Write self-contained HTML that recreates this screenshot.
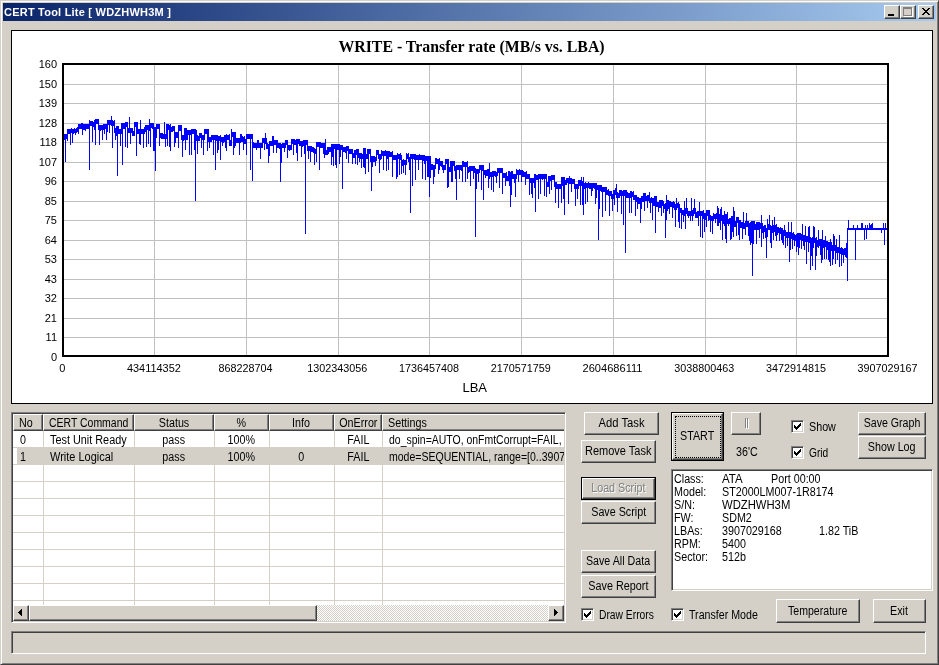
<!DOCTYPE html><html><head><meta charset="utf-8"><title>CERT Tool Lite</title><style>
html,body{margin:0;padding:0}
body{width:939px;height:665px;overflow:hidden;background:#d4d0c8;font-family:"Liberation Sans",Arial,sans-serif;font-size:12px;color:#000;position:relative}
div{position:absolute;box-sizing:border-box;white-space:nowrap}
div,svg{will-change:transform}
.sl{display:inline-block;transform:scaleX(0.895);transform-origin:0 50%}
.sc{display:inline-block;transform:scaleX(0.895);transform-origin:50% 50%}
.btn{background:#d4d0c8;text-align:center;border:1px solid;border-color:#fff #404040 #404040 #fff;box-shadow:inset -1px -1px 0 #808080,inset 1px 1px 0 #d4d0c8}
.dis{color:#808080;text-shadow:1px 1px 0 #fff}
.sunk{border:1px solid;border-color:#808080 #fff #fff #808080;box-shadow:inset 1px 1px 0 #404040,inset -1px -1px 0 #d4d0c8}
.cb{width:13px;height:13px;background:#fff;border:1px solid;border-color:#808080 #fff #fff #808080;box-shadow:inset 1px 1px 0 #404040,inset -1px -1px 0 #d4d0c8}
.hd{background:#d4d0c8;border:1px solid;border-color:#fff #404040 #404040 #fff;box-shadow:inset -1px -1px 0 #808080;height:17px;top:0;line-height:17px;padding:0 0 0 5.3px}
.cell{height:17px;line-height:19px}
svg text{font-family:"Liberation Sans",Arial,sans-serif;font-size:11px;fill:#000}
</style></head><body>
<div class="" style="left:0px;top:0px;width:939px;height:665px;border:1px solid;border-color:#d4d0c8 #404040 #404040 #d4d0c8;box-shadow:inset 1px 1px 0 #fff,inset -1px -1px 0 #808080"></div>
<div class="" style="left:3px;top:3px;width:933px;height:18px;background:linear-gradient(to right,#0a246a,#a6caf0);color:#fff;font-weight:bold;line-height:19px;padding-left:1px;font-size:11px;letter-spacing:0.22px">CERT Tool Lite [ WDZHWH3M ]</div>
<div class="btn" style="left:884px;top:5px;width:16px;height:14px;padding:0"><svg width="16" height="14" style="position:absolute;left:-1px;top:-1px" shape-rendering="crispEdges"><rect x="4" y="9" width="6" height="2" fill="#000"/></svg></div>
<div class="btn" style="left:900px;top:5px;width:16px;height:14px;padding:0"><svg width="16" height="14" style="position:absolute;left:-1px;top:-1px" shape-rendering="crispEdges"><path d="M4 3h9v9h-9z" fill="#fff"/><path d="M3 2h9v9h-9z" fill="#808080"/><path d="M4 4h7v6h-7z" fill="#d4d0c8"/><path d="M5 5h7v6h-7z" fill="none"/></svg></div>
<div class="btn" style="left:918px;top:5px;width:16px;height:14px;padding:0"><svg width="16" height="14" style="position:absolute;left:-1px;top:-1px" shape-rendering="crispEdges"><path d="M4 3h2v1h1v1h2v-1h1v-1h2v1h-1v1h-1v1h-1v1h1v1h1v1h1v1h-2v-1h-1v-1h-2v1h-1v1h-2v-1h1v-1h1v-1h1v-1h-1v-1h-1v-1h-1z" fill="#000"/></svg></div>
<div class="" style="left:11px;top:30px;width:922px;height:374px;background:#fff;border:1px solid #000"></div>
<svg width="939" height="665" style="position:absolute;left:0;top:0"><path d="M64 84.5H887M64 103.5H887M64 123.5H887M64 142.5H887M64 162.5H887M64 181.5H887M64 201.5H887M64 220.5H887M64 240.5H887M64 259.5H887M64 279.5H887M64 298.5H887M64 318.5H887M64 337.5H887M154.5 65V355M246.5 65V355M338.5 65V355M429.5 65V355M521.5 65V355M613.5 65V355M705.5 65V355M796.5 65V355" stroke="#c0c0c0" stroke-width="1" fill="none" shape-rendering="crispEdges"/><path d="M64.5 134V140M65.5 134V162M66.5 134V139M67.5 129V141M68.5 129V134M69.5 129V134M70.5 129V145M71.5 128V133M72.5 129V143M73.5 129V134M74.5 128V133M75.5 129V135M76.5 128V133M77.5 127V132M78.5 124V134M79.5 124V129M80.5 124V129M81.5 123V129M82.5 123V135M83.5 124V130M84.5 124V130M85.5 124V131M86.5 124V129M87.5 124V129M88.5 124V129M89.5 120V170M90.5 121V126M91.5 121V126M92.5 121V142M93.5 122V127M94.5 120V130M95.5 119V145M96.5 119V124M97.5 119V124M98.5 119V130M99.5 125V145M100.5 125V131M101.5 125V130M102.5 125V140M103.5 124V130M104.5 124V134M105.5 124V129M106.5 124V140M107.5 120V132M108.5 120V125M109.5 120V133M110.5 120V125M111.5 116V126M112.5 120V148M113.5 121V126M114.5 120V133M115.5 128V140M116.5 126V136M117.5 126V176M118.5 126V134M119.5 129V134M120.5 129V146M121.5 123V134M122.5 123V165M123.5 123V129M124.5 123V129M125.5 122V147M126.5 122V127M127.5 122V148M128.5 128V133M129.5 117V133M130.5 128V144M131.5 128V133M132.5 128V136M133.5 131V136M134.5 122V136M135.5 122V127M136.5 122V156M137.5 122V134M138.5 129V134M139.5 129V144M140.5 120V145M141.5 129V134M142.5 129V134M143.5 129V148M144.5 127V134M145.5 125V132M146.5 125V147M147.5 125V130M148.5 125V144M149.5 119V131M150.5 123V147M151.5 123V128M152.5 123V129M153.5 123V151M154.5 127V151M155.5 127V171M156.5 124V138M157.5 124V129M158.5 124V129M159.5 124V146M160.5 133V138M161.5 133V139M162.5 133V139M163.5 134V139M164.5 122V139M165.5 134V147M166.5 124V139M167.5 124V146M168.5 124V130M169.5 125V147M170.5 124V151M171.5 127V132M172.5 126V132M173.5 126V131M174.5 126V147M175.5 132V143M176.5 132V138M177.5 132V138M178.5 125V148M179.5 125V131M180.5 125V131M181.5 125V140M182.5 135V157M183.5 135V141M184.5 128V140M185.5 128V150M186.5 128V140M187.5 130V140M188.5 130V135M189.5 130V155M190.5 130V135M191.5 129V155M192.5 129V134M193.5 129V134M194.5 129V150M195.5 129V201M196.5 130V141M197.5 135V154M198.5 136V141M199.5 133V141M200.5 133V138M201.5 133V148M202.5 135V140M203.5 135V155M204.5 129V140M205.5 129V134M206.5 129V134M207.5 129V151M208.5 129V142M209.5 137V148M210.5 137V142M211.5 135V142M212.5 135V140M213.5 135V155M214.5 135V140M215.5 135V170M216.5 135V141M217.5 135V153M218.5 136V150M219.5 136V141M220.5 135V160M221.5 137V142M222.5 137V146M223.5 137V143M224.5 135V142M225.5 135V148M226.5 134V151M227.5 135V140M228.5 135V140M229.5 134V146M230.5 140V146M231.5 129V146M232.5 132V137M233.5 132V155M234.5 132V148M235.5 132V146M236.5 138V143M237.5 138V143M238.5 138V143M239.5 138V155M240.5 134V143M241.5 134V142M242.5 136V142M243.5 137V150M244.5 136V144M245.5 139V144M246.5 134V155M247.5 134V139M248.5 134V139M249.5 134V139M250.5 134V170M251.5 134V139M252.5 134V181M253.5 142V148M254.5 143V148M255.5 143V148M256.5 143V150M257.5 140V148M258.5 140V148M259.5 143V148M260.5 143V159M261.5 143V148M262.5 138V148M263.5 138V143M264.5 138V150M265.5 133V144M266.5 138V149M267.5 143V149M268.5 144V163M269.5 141V156M270.5 141V146M271.5 141V146M272.5 136V146M273.5 136V153M274.5 140V145M275.5 140V145M276.5 140V153M277.5 140V148M278.5 143V148M279.5 143V149M280.5 143V182M281.5 144V163M282.5 143V148M283.5 143V148M284.5 143V152M285.5 140V148M286.5 140V145M287.5 140V158M288.5 145V150M289.5 145V151M290.5 145V150M291.5 139V150M292.5 139V144M293.5 139V155M294.5 139V145M295.5 140V145M296.5 139V153M297.5 139V161M298.5 139V144M299.5 139V146M300.5 141V146M301.5 141V157M302.5 141V147M303.5 140V146M304.5 140V154M305.5 140V234M306.5 140V145M307.5 140V151M308.5 146V159M309.5 146V151M310.5 146V162M311.5 146V152M312.5 147V152M313.5 147V153M314.5 148V165M315.5 149V154M316.5 142V162M317.5 142V147M318.5 142V147M319.5 142V170M320.5 142V148M321.5 143V148M322.5 143V148M323.5 143V154M324.5 143V158M325.5 139V155M326.5 150V155M327.5 147V155M328.5 147V154M329.5 147V152M330.5 147V152M331.5 144V165M332.5 144V157M333.5 144V166M334.5 144V149M335.5 144V165M336.5 144V168M337.5 144V150M338.5 144V150M339.5 144V164M340.5 145V157M341.5 145V150M342.5 145V189M343.5 147V152M344.5 147V152M345.5 147V153M346.5 146V159M347.5 146V151M348.5 146V163M349.5 149V154M350.5 149V154M351.5 149V154M352.5 149V164M353.5 153V158M354.5 150V158M355.5 150V164M356.5 149V155M357.5 149V165M358.5 149V158M359.5 153V162M360.5 153V159M361.5 153V168M362.5 154V159M363.5 148V167M364.5 148V168M365.5 148V174M366.5 154V159M367.5 149V159M368.5 149V172M369.5 149V154M370.5 149V162M371.5 156V191M372.5 156V167M373.5 156V162M374.5 156V162M375.5 157V166M376.5 150V161M377.5 150V155M378.5 150V159M379.5 154V173M380.5 154V160M381.5 150V159M382.5 151V156M383.5 151V170M384.5 151V156M385.5 150V156M386.5 151V171M387.5 151V159M388.5 151V170M389.5 151V157M390.5 152V157M391.5 152V157M392.5 151V177M393.5 155V160M394.5 155V160M395.5 155V160M396.5 155V179M397.5 153V177M398.5 154V159M399.5 154V175M400.5 153V160M401.5 155V174M402.5 160V166M403.5 159V173M404.5 160V165M405.5 160V175M406.5 153V165M407.5 154V159M408.5 153V162M409.5 157V170M410.5 154V213M411.5 154V159M412.5 154V186M413.5 154V159M414.5 154V160M415.5 154V180M416.5 155V160M417.5 155V160M418.5 155V170M419.5 154V160M420.5 155V160M421.5 155V160M422.5 155V179M423.5 155V161M424.5 155V164M425.5 156V180M426.5 156V161M427.5 156V177M428.5 156V177M429.5 156V197M430.5 156V178M431.5 164V170M432.5 164V170M433.5 165V184M434.5 165V177M435.5 158V169M436.5 158V164M437.5 159V164M438.5 159V174M439.5 158V170M440.5 161V166M441.5 161V167M442.5 161V170M443.5 165V173M444.5 165V170M445.5 159V170M446.5 159V164M447.5 159V188M448.5 159V187M449.5 167V172M450.5 161V172M451.5 161V182M452.5 161V182M453.5 161V166M454.5 161V171M455.5 166V179M456.5 165V200M457.5 165V170M458.5 165V170M459.5 165V179M460.5 165V170M461.5 165V171M462.5 161V182M463.5 161V167M464.5 162V167M465.5 162V182M466.5 162V167M467.5 161V179M468.5 167V173M469.5 166V172M470.5 166V186M471.5 166V171M472.5 166V171M473.5 166V179M474.5 166V173M475.5 168V237M476.5 169V189M477.5 169V174M478.5 169V182M479.5 165V173M480.5 165V170M481.5 165V190M482.5 165V171M483.5 165V200M484.5 170V175M485.5 170V178M486.5 170V176M487.5 169V176M488.5 169V188M489.5 163V179M490.5 172V177M491.5 172V190M492.5 171V177M493.5 171V192M494.5 171V176M495.5 171V177M496.5 172V183M497.5 168V176M498.5 168V173M499.5 168V188M500.5 168V173M501.5 168V173M502.5 168V194M503.5 173V178M504.5 173V178M505.5 173V186M506.5 172V181M507.5 176V181M508.5 171V181M509.5 171V186M510.5 172V207M511.5 171V195M512.5 171V179M513.5 174V179M514.5 174V183M515.5 174V197M516.5 169V179M517.5 170V175M518.5 170V182M519.5 169V175M520.5 170V175M521.5 170V182M522.5 170V177M523.5 171V177M524.5 172V177M525.5 172V185M526.5 171V179M527.5 174V179M528.5 174V179M529.5 174V195M530.5 178V183M531.5 178V194M532.5 178V198M533.5 178V183M534.5 174V188M535.5 174V212M536.5 175V180M537.5 175V180M538.5 174V199M539.5 174V179M540.5 174V194M541.5 174V179M542.5 174V180M543.5 174V179M544.5 174V196M545.5 174V179M546.5 174V197M547.5 182V187M548.5 176V187M549.5 176V194M550.5 176V181M551.5 175V190M552.5 175V180M553.5 175V180M554.5 175V187M555.5 182V203M556.5 182V189M557.5 184V189M558.5 184V208M559.5 184V189M560.5 184V189M561.5 177V203M562.5 177V186M563.5 177V199M564.5 177V215M565.5 180V185M566.5 178V185M567.5 178V183M568.5 178V204M569.5 176V184M570.5 178V184M571.5 178V192M572.5 179V184M573.5 179V184M574.5 179V189M575.5 184V206M576.5 184V189M577.5 184V199M578.5 180V189M579.5 180V186M580.5 180V205M581.5 177V186M582.5 181V205M583.5 177V215M584.5 183V189M585.5 182V204M586.5 183V188M587.5 183V202M588.5 182V188M589.5 183V189M590.5 183V189M591.5 183V196M592.5 183V191M593.5 183V188M594.5 183V189M595.5 183V204M596.5 183V198M597.5 185V190M598.5 185V240M599.5 185V209M600.5 185V191M601.5 185V192M602.5 187V217M603.5 187V192M604.5 187V192M605.5 187V211M606.5 187V195M607.5 190V195M608.5 189V196M609.5 191V216M610.5 191V196M611.5 191V199M612.5 194V211M613.5 190V199M614.5 190V205M615.5 188V195M616.5 184V198M617.5 192V212M618.5 193V198M619.5 190V198M620.5 190V196M621.5 190V214M622.5 191V196M623.5 190V225M624.5 190V196M625.5 190V253M626.5 190V198M627.5 192V198M628.5 193V198M629.5 193V213M630.5 191V198M631.5 191V213M632.5 192V197M633.5 191V200M634.5 195V200M635.5 195V216M636.5 195V202M637.5 197V209M638.5 197V204M639.5 198V204M640.5 198V223M641.5 196V209M642.5 196V202M643.5 193V202M644.5 193V211M645.5 193V201M646.5 196V201M647.5 195V208M648.5 195V201M649.5 192V203M650.5 198V213M651.5 197V203M652.5 198V220M653.5 198V206M654.5 196V206M655.5 196V233M656.5 196V207M657.5 202V207M658.5 202V212M659.5 200V208M660.5 200V208M661.5 200V216M662.5 200V206M663.5 201V213M664.5 204V209M665.5 203V238M666.5 195V220M667.5 200V211M668.5 200V209M669.5 201V214M670.5 201V207M671.5 202V207M672.5 202V218M673.5 201V208M674.5 202V210M675.5 204V227M676.5 198V210M677.5 203V208M678.5 202V222M679.5 204V228M680.5 208V213M681.5 208V229M682.5 210V215M683.5 210V222M684.5 201V216M685.5 208V229M686.5 198V214M687.5 208V216M688.5 211V218M689.5 211V216M690.5 211V221M691.5 198V216M692.5 210V221M693.5 208V216M694.5 199V214M695.5 208V218M696.5 212V218M697.5 211V218M698.5 211V226M699.5 202V216M700.5 211V237M701.5 211V216M702.5 211V238M703.5 210V219M704.5 213V232M705.5 213V220M706.5 210V227M707.5 210V216M708.5 210V221M709.5 210V220M710.5 215V232M711.5 216V221M712.5 216V234M713.5 213V221M714.5 214V219M715.5 214V223M716.5 213V219M717.5 206V226M718.5 208V226M719.5 214V223M720.5 209V230M721.5 207V221M722.5 215V240M723.5 215V224M724.5 211V226M725.5 214V239M726.5 214V243M727.5 212V224M728.5 219V226M729.5 218V224M730.5 218V240M731.5 216V239M732.5 216V232M733.5 207V237M734.5 211V227M735.5 221V227M736.5 217V236M737.5 217V223M738.5 217V235M739.5 220V240M740.5 220V228M741.5 222V228M742.5 222V239M743.5 212V229M744.5 223V229M745.5 221V235M746.5 213V227M747.5 221V227M748.5 221V236M749.5 223V241M750.5 222V245M751.5 221V243M752.5 221V276M753.5 221V244M754.5 221V230M755.5 224V230M756.5 222V244M757.5 222V230M758.5 222V230M759.5 222V238M760.5 223V229M761.5 215V247M762.5 223V233M763.5 226V239M764.5 225V232M765.5 225V238M766.5 228V258M767.5 219V237M768.5 224V230M769.5 215V230M770.5 225V243M771.5 226V248M772.5 220V233M773.5 225V240M774.5 217V232M775.5 225V236M776.5 224V241M777.5 227V235M778.5 227V233M779.5 228V241M780.5 227V234M781.5 228V240M782.5 228V243M783.5 230V245M784.5 225V236M785.5 230V248M786.5 232V238M787.5 232V246M788.5 222V238M789.5 232V262M790.5 232V250M791.5 222V239M792.5 233V249M793.5 232V240M794.5 234V246M795.5 235V241M796.5 234V252M797.5 233V247M798.5 233V255M799.5 233V248M800.5 233V240M801.5 234V249M802.5 224V241M803.5 235V246M804.5 235V250M805.5 226V242M806.5 236V264M807.5 236V242M808.5 227V252M809.5 226V243M810.5 237V270M811.5 238V256M812.5 237V266M813.5 226V248M814.5 227V243M815.5 238V270M816.5 237V256M817.5 240V247M818.5 230V248M819.5 239V246M820.5 239V255M821.5 239V263M822.5 230V260M823.5 240V248M824.5 240V259M825.5 236V247M826.5 241V259M827.5 241V250M828.5 242V260M829.5 242V262M830.5 239V266M831.5 242V251M832.5 245V265M833.5 234V259M834.5 236V251M835.5 245V264M836.5 239V253M837.5 247V260M838.5 247V253M839.5 235V267M840.5 248V254M841.5 247V266M842.5 248V255M843.5 249V263M844.5 248V255M845.5 248V257M846.5 243V258M847.5 228V281M848.5 220V230M849.5 228V230M850.5 228V230M851.5 228V230M852.5 228V230M853.5 225V230M854.5 228V230M855.5 228V260M856.5 228V230M857.5 225V230M858.5 228V230M859.5 228V230M860.5 228V230M861.5 223V230M862.5 223V230M863.5 228V230M864.5 228V240M865.5 225V230M866.5 228V239M867.5 225V230M868.5 228V230M869.5 223V230M870.5 225V230M871.5 224V230M872.5 223V230M873.5 228V230M874.5 228V230M875.5 228V230M876.5 228V230M877.5 228V230M878.5 228V230M879.5 228V230M880.5 228V230M881.5 228V233M882.5 228V230M883.5 223V230M884.5 228V245M885.5 223V230M886.5 228V230M887.5 218V232" stroke="#0000ff" stroke-width="1" fill="none" shape-rendering="crispEdges"/><rect x="63" y="64" width="825" height="292" fill="none" stroke="#000" stroke-width="2" shape-rendering="crispEdges"/><text x="57" y="68" text-anchor="end">160</text><text x="57" y="88" text-anchor="end">150</text><text x="57" y="107" text-anchor="end">139</text><text x="57" y="127" text-anchor="end">128</text><text x="57" y="146" text-anchor="end">118</text><text x="57" y="166" text-anchor="end">107</text><text x="57" y="185" text-anchor="end">96</text><text x="57" y="205" text-anchor="end">85</text><text x="57" y="224" text-anchor="end">75</text><text x="57" y="244" text-anchor="end">64</text><text x="57" y="263" text-anchor="end">53</text><text x="57" y="283" text-anchor="end">43</text><text x="57" y="302" text-anchor="end">32</text><text x="57" y="322" text-anchor="end">21</text><text x="57" y="341" text-anchor="end">11</text><text x="57" y="361" text-anchor="end">0</text><text x="62.2" y="372" text-anchor="middle">0</text><text x="153.9" y="372" text-anchor="middle" textLength="54.0" lengthAdjust="spacingAndGlyphs">434114352</text><text x="245.6" y="372" text-anchor="middle" textLength="54.0" lengthAdjust="spacingAndGlyphs">868228704</text><text x="337.3" y="372" text-anchor="middle" textLength="60.0" lengthAdjust="spacingAndGlyphs">1302343056</text><text x="429.0" y="372" text-anchor="middle" textLength="60.0" lengthAdjust="spacingAndGlyphs">1736457408</text><text x="520.8" y="372" text-anchor="middle" textLength="60.0" lengthAdjust="spacingAndGlyphs">2170571759</text><text x="612.5" y="372" text-anchor="middle" textLength="60.0" lengthAdjust="spacingAndGlyphs">2604686111</text><text x="704.2" y="372" text-anchor="middle" textLength="60.0" lengthAdjust="spacingAndGlyphs">3038800463</text><text x="795.9" y="372" text-anchor="middle" textLength="60.0" lengthAdjust="spacingAndGlyphs">3472914815</text><text x="887.6" y="372" text-anchor="middle" textLength="60.0" lengthAdjust="spacingAndGlyphs">3907029167</text><text x="474.7" y="392" text-anchor="middle" style="font-size:13px">LBA</text><text x="471.5" y="52" text-anchor="middle" style="font-family:'Liberation Serif',serif;font-weight:bold;font-size:15.85px">WRITE - Transfer rate (MB/s vs. LBA)</text></svg>
<div class="sunk" style="left:11px;top:412px;width:555px;height:211px;background:#fff"></div>
<div style="left:13px;top:414px;width:551px;height:191px;overflow:hidden;background:#fff"><div class="" style="left:0px;top:33px;width:551px;height:1px;background:#d4d0c8"></div><div class="" style="left:0px;top:50px;width:551px;height:1px;background:#d4d0c8"></div><div class="" style="left:0px;top:67px;width:551px;height:1px;background:#d4d0c8"></div><div class="" style="left:0px;top:84px;width:551px;height:1px;background:#d4d0c8"></div><div class="" style="left:0px;top:101px;width:551px;height:1px;background:#d4d0c8"></div><div class="" style="left:0px;top:118px;width:551px;height:1px;background:#d4d0c8"></div><div class="" style="left:0px;top:135px;width:551px;height:1px;background:#d4d0c8"></div><div class="" style="left:0px;top:152px;width:551px;height:1px;background:#d4d0c8"></div><div class="" style="left:0px;top:169px;width:551px;height:1px;background:#d4d0c8"></div><div class="" style="left:0px;top:186px;width:551px;height:1px;background:#d4d0c8"></div><div class="" style="left:30px;top:17px;width:1px;height:174px;background:#d4d0c8"></div><div class="" style="left:121px;top:17px;width:1px;height:174px;background:#d4d0c8"></div><div class="" style="left:201px;top:17px;width:1px;height:174px;background:#d4d0c8"></div><div class="" style="left:256px;top:17px;width:1px;height:174px;background:#d4d0c8"></div><div class="" style="left:321px;top:17px;width:1px;height:174px;background:#d4d0c8"></div><div class="" style="left:369px;top:17px;width:1px;height:174px;background:#d4d0c8"></div><div class="" style="left:4px;top:34px;width:547px;height:17px;background:#d4d0c8"></div><div class="hd" style="left:0px;width:30px;"><span class="sl" style="">No</span></div><div class="hd" style="left:30px;width:91px;"><span class="sl" style="transform:scaleX(0.872);">CERT Command</span></div><div class="hd" style="left:121px;width:80px;text-align:center;padding-left:0;"><span class="sc" style="">Status</span></div><div class="hd" style="left:201px;width:55px;text-align:center;padding-left:0;"><span class="sc" style="">%</span></div><div class="hd" style="left:256px;width:65px;text-align:center;padding-left:0;"><span class="sc" style="">Info</span></div><div class="hd" style="left:321px;width:48px;text-align:center;padding-left:0;"><span class="sc" style="">OnError</span></div><div class="hd" style="left:369px;width:400px;"><span class="sl" style="">Settings</span></div><div class="cell" style="left:0px;top:17px;width:30px;padding-left:6.8px;overflow:hidden;"><span class="sl" style="">0</span></div><div class="cell" style="left:30px;top:17px;width:91px;padding-left:6.8px;overflow:hidden;"><span class="sl" style="transform:scaleX(0.905);">Test Unit Ready</span></div><div class="cell" style="left:121px;top:17px;width:80px;padding-left:0px;overflow:hidden;text-align:center;"><span class="sc" style="">pass</span></div><div class="cell" style="left:201px;top:17px;width:55px;padding-left:0px;overflow:hidden;text-align:center;"><span class="sc" style="">100%</span></div><div class="cell" style="left:256px;top:17px;width:65px;padding-left:0px;overflow:hidden;text-align:center;"></div><div class="cell" style="left:321px;top:17px;width:48px;padding-left:0px;overflow:hidden;text-align:center;"><span class="sc" style="">FAIL</span></div><div class="cell" style="left:369px;top:17px;width:400px;padding-left:6.8px;overflow:hidden;"><span class="sl" style="transform:scaleX(0.872);">do_spin=AUTO, onFmtCorrupt=FAIL,</span></div><div class="cell" style="left:0px;top:34px;width:30px;padding-left:6.8px;overflow:hidden;"><span class="sl" style="">1</span></div><div class="cell" style="left:30px;top:34px;width:91px;padding-left:6.8px;overflow:hidden;"><span class="sl" style="transform:scaleX(0.915);">Write Logical</span></div><div class="cell" style="left:121px;top:34px;width:80px;padding-left:0px;overflow:hidden;text-align:center;"><span class="sc" style="">pass</span></div><div class="cell" style="left:201px;top:34px;width:55px;padding-left:0px;overflow:hidden;text-align:center;"><span class="sc" style="">100%</span></div><div class="cell" style="left:256px;top:34px;width:65px;padding-left:0px;overflow:hidden;text-align:center;"><span class="sc" style="">0</span></div><div class="cell" style="left:321px;top:34px;width:48px;padding-left:0px;overflow:hidden;text-align:center;"><span class="sc" style="">FAIL</span></div><div class="cell" style="left:369px;top:34px;width:400px;padding-left:6.8px;overflow:hidden;"><span class="sl" style="transform:scaleX(0.877);">mode=SEQUENTIAL, range=[0..3907029167]</span></div></div>
<div class="" style="left:13px;top:605px;width:551px;height:16px;background-color:#eae8e3;background-image:conic-gradient(#fff 25%,#d4d0c8 0 50%,#fff 0 75%,#d4d0c8 0);background-size:2px 2px"></div>
<div class="btn" style="left:13px;top:605px;width:16px;height:16px"><svg width="16" height="16" style="position:absolute;left:-1px;top:-1px" shape-rendering="crispEdges"><path d="M9 4v7h-1v-1h-1v-1h-1v-1h-1v-1h1v-1h1v-1h1v-1z" fill="#000"/></svg></div>
<div class="btn" style="left:548px;top:605px;width:16px;height:16px"><svg width="16" height="16" style="position:absolute;left:-1px;top:-1px" shape-rendering="crispEdges"><path d="M6 4v7h1v-1h1v-1h1v-1h1v-1h-1v-1h-1v-1h-1v-1z" fill="#000"/></svg></div>
<div class="btn" style="left:29px;top:605px;width:288px;height:16px"></div>
<div class="btn" style="left:584px;top:412px;width:75px;height:23px;line-height:21px"><span class="sc" style="transform:scaleX(0.936);">Add Task</span></div>
<div class="btn" style="left:581px;top:440px;width:75px;height:23px;line-height:21px"><span class="sc" style="transform:scaleX(0.918);">Remove Task</span></div>
<div class="" style="left:581px;top:477px;width:75px;height:23px;background:#000;"></div><div class="btn dis" style="left:582px;top:478px;width:73px;height:21px;line-height:19px"><span class="sc" style="transform:scaleX(0.894);">Load Script</span></div>
<div class="btn" style="left:581px;top:501px;width:75px;height:23px;line-height:21px"><span class="sc" style="transform:scaleX(0.894);">Save Script</span></div>
<div class="btn" style="left:581px;top:550px;width:75px;height:23px;line-height:21px"><span class="sc" style="transform:scaleX(0.89);">Save All Data</span></div>
<div class="btn" style="left:581px;top:575px;width:75px;height:23px;line-height:21px"><span class="sc" style="transform:scaleX(0.901);">Save Report</span></div>
<div class="" style="left:671px;top:412px;width:53px;height:49px;background:#000;"></div><div class="btn" style="left:672px;top:413px;width:51px;height:47px;line-height:45px"><span class="sc" style="">START</span><div style="left:2px;top:2px;width:46px;height:42px;border:1px dotted #000"></div></div>
<div class="btn" style="left:731px;top:412px;width:30px;height:23px;line-height:21px"><svg width="30" height="23" style="position:absolute;left:-1px;top:-1px" shape-rendering="crispEdges"><path d="M15.5 7v10M17.5 7v10" stroke="#fff"/><path d="M14.5 6v10M16.5 6v10" stroke="#808080"/></svg></div>
<div class="t" style="left:736px;top:446px;line-height:13px"><span class="sl" style="">36&#39;C</span></div>
<div class="cb" style="left:791px;top:420px"><svg width="13" height="13" style="position:absolute;left:-1px;top:-1px" shape-rendering="crispEdges"><path d="M3 5h1v1h1v1h1v-1h1v-1h1v-1h1v-1h1v3h-1v1h-1v1h-1v1h-1v1h-1v-1h-1v-1h-1z" fill="#000"/></svg></div><div class="t" style="left:809px;top:421px;line-height:13px"><span class="sl" style="">Show</span></div>
<div class="cb" style="left:791px;top:446px"><svg width="13" height="13" style="position:absolute;left:-1px;top:-1px" shape-rendering="crispEdges"><path d="M3 5h1v1h1v1h1v-1h1v-1h1v-1h1v-1h1v3h-1v1h-1v1h-1v1h-1v1h-1v-1h-1v-1h-1z" fill="#000"/></svg></div><div class="t" style="left:809px;top:447px;line-height:13px"><span class="sl" style="transform:scaleX(0.85);">Grid</span></div>
<div class="btn" style="left:858px;top:412px;width:68px;height:23px;line-height:21px"><span class="sc" style="transform:scaleX(0.884);">Save Graph</span></div>
<div class="btn" style="left:858px;top:436px;width:68px;height:23px;line-height:21px"><span class="sc" style="transform:scaleX(0.893);">Show Log</span></div>
<div class="sunk" style="left:671px;top:469px;width:262px;height:122px;background:#fff"></div>
<div class="t" style="left:674px;top:473px;line-height:13px;width:250px;height:13px"><span class="sl" style="">Class:</span><span class="sl" style="position:absolute;left:48px;transform:scaleX(0.96);">ATA</span><span class="sl" style="position:absolute;left:97px">Port 00:00</span></div>
<div class="t" style="left:674px;top:486px;line-height:13px;width:250px;height:13px"><span class="sl" style="">Model:</span><span class="sl" style="position:absolute;left:48px;transform:scaleX(0.894);">ST2000LM007-1R8174</span></div>
<div class="t" style="left:674px;top:499px;line-height:13px;width:250px;height:13px"><span class="sl" style="">S/N:</span><span class="sl" style="position:absolute;left:48px;transform:scaleX(0.94);">WDZHWH3M</span></div>
<div class="t" style="left:674px;top:512px;line-height:13px;width:250px;height:13px"><span class="sl" style="">FW:</span><span class="sl" style="position:absolute;left:48px;">SDM2</span></div>
<div class="t" style="left:674px;top:525px;line-height:13px;width:250px;height:13px"><span class="sl" style="">LBAs:</span><span class="sl" style="position:absolute;left:48px;transform:scaleX(0.895);">3907029168</span><span class="sl" style="position:absolute;left:145px">1.82 TiB</span></div>
<div class="t" style="left:674px;top:538px;line-height:13px;width:250px;height:13px"><span class="sl" style="">RPM:</span><span class="sl" style="position:absolute;left:48px;">5400</span></div>
<div class="t" style="left:674px;top:551px;line-height:13px;width:250px;height:13px"><span class="sl" style="">Sector:</span><span class="sl" style="position:absolute;left:48px;">512b</span></div>
<div class="cb" style="left:581px;top:608px"><svg width="13" height="13" style="position:absolute;left:-1px;top:-1px" shape-rendering="crispEdges"><path d="M3 5h1v1h1v1h1v-1h1v-1h1v-1h1v-1h1v3h-1v1h-1v1h-1v1h-1v1h-1v-1h-1v-1h-1z" fill="#000"/></svg></div><div class="t" style="left:599px;top:609px;line-height:13px"><span class="sl" style="transform:scaleX(0.857);">Draw Errors</span></div>
<div class="cb" style="left:671px;top:608px"><svg width="13" height="13" style="position:absolute;left:-1px;top:-1px" shape-rendering="crispEdges"><path d="M3 5h1v1h1v1h1v-1h1v-1h1v-1h1v-1h1v3h-1v1h-1v1h-1v1h-1v1h-1v-1h-1v-1h-1z" fill="#000"/></svg></div><div class="t" style="left:689px;top:609px;line-height:13px"><span class="sl" style="transform:scaleX(0.887);">Transfer Mode</span></div>
<div class="btn" style="left:776px;top:599px;width:84px;height:24px;line-height:22px"><span class="sc" style="transform:scaleX(0.88);">Temperature</span></div>
<div class="btn" style="left:873px;top:599px;width:53px;height:24px;line-height:22px"><span class="sc" style="">Exit</span></div>
<div class="sunk" style="left:11px;top:631px;width:915px;height:23px;"></div>
</body></html>
